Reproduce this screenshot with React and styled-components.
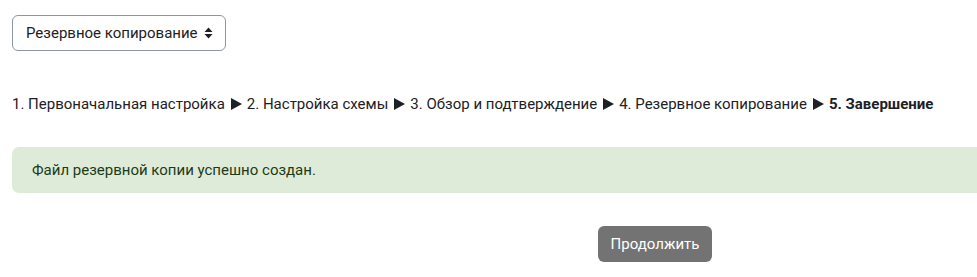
import React from 'react'
import styled, { createGlobalStyle } from 'styled-components'

const GlobalStyle = createGlobalStyle`
  html, body {
    margin: 0;
    padding: 0;
    background: #fff;
    overflow: hidden;
  }
  body {
    font-family: Roboto, "Liberation Sans", sans-serif;
    font-size: 15px;
    line-height: 1.5;
    color: #1d2125;
  }
`

const Page = styled.div`
  width: 1286px;
  padding: 15px 12px 0;
  display: flex;
  flex-direction: column;
`

const SelectBox = styled.div`
  align-self: flex-start;
  display: flex;
  align-items: center;
  gap: 6px;
  height: 36px;
  box-sizing: border-box;
  padding: 0 12px 0 13px;
  border: 1px solid #8f959e;
  border-radius: 6px;
  background: #fff;
  color: #1d2125;
  cursor: pointer;
`

const Steps = styled.div`
  display: flex;
  align-items: center;
  flex-wrap: wrap;
  margin-top: 42px;
  height: 22px;
`

const Step = styled.span`
  font-weight: ${(p) => (p.$current ? 700 : 400)};
`

const Arrow = styled.svg`
  width: 11px;
  height: 12px;
  margin: 0 5px 0 6px;
  fill: #1d2125;
`

const Alert = styled.div`
  margin-top: 32px;
  height: 46px;
  box-sizing: border-box;
  padding: 0 20px;
  display: flex;
  align-items: center;
  background: #dfebd9;
  color: #1c3a17;
  border-radius: 7px;
`

const Actions = styled.div`
  display: flex;
  justify-content: center;
  margin-top: 33px;
`

const Button = styled.button`
  height: 36px;
  padding: 0 13px;
  border: none;
  border-radius: 6px;
  background: #737373;
  color: #fff;
  font-family: inherit;
  font-size: 15px;
  cursor: pointer;
`

const steps = [
  '1. Первоначальная настройка',
  '2. Настройка схемы',
  '3. Обзор и подтверждение',
  '4. Резервное копирование',
  '5. Завершение',
]

const Caret = () => (
  <svg width="9" height="12" viewBox="0 0 9 12">
    <path d="M4.5 0.5 L8.5 5 H0.5 Z M0.5 7 H8.5 L4.5 11.5 Z" fill="#1d2125" />
  </svg>
)

export default function App() {
  return (
    <Page>
      <GlobalStyle />
      <SelectBox>
        Резервное копирование
        <Caret />
      </SelectBox>
      <Steps>
        {steps.map((s, i) => (
          <React.Fragment key={s}>
            {i > 0 && (
              <Arrow viewBox="0 0 11 12">
                <path d="M0 0 L11 6 L0 12 Z" />
              </Arrow>
            )}
            <Step $current={i === steps.length - 1}>{s}</Step>
          </React.Fragment>
        ))}
      </Steps>
      <Alert>Файл резервной копии успешно создан.</Alert>
      <Actions>
        <Button>Продолжить</Button>
      </Actions>
    </Page>
  )
}
